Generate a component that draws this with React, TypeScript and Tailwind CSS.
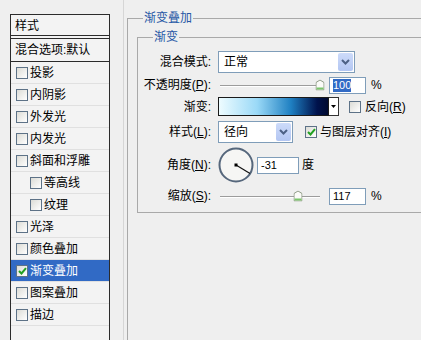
import React from "react";

const items = [
  { label: "投影" },
  { label: "内阴影" },
  { label: "外发光" },
  { label: "内发光" },
  { label: "斜面和浮雕" },
  { label: "等高线", sub: true },
  { label: "纹理", sub: true },
  { label: "光泽" },
  { label: "颜色叠加" },
  { label: "渐变叠加", checked: true, active: true },
  { label: "图案叠加" },
  { label: "描边" },
];

function CheckBox({ checked = false }: { checked?: boolean }) {
  return (
    <span className="flex h-[12px] w-[12px] shrink-0 items-center justify-center border border-[#5d7287] bg-gradient-to-br from-[#dcdcd6] to-white">
      {checked && (
        <svg width="9" height="8" viewBox="0 0 9 8">
          <path d="M1 4l2.5 2.5L8 1.2" stroke="#21a121" strokeWidth="2" fill="none" />
        </svg>
      )}
    </span>
  );
}

function Select({ value, width }: { value: string; width: string }) {
  return (
    <div className={`flex h-[22px] items-center border border-[#7f9db9] bg-white pl-[5px] pr-[1px] ${width}`}>
      <span className="flex-1">{value}</span>
      <span className="flex h-[18px] w-[15px] items-center justify-center rounded-[2px] bg-gradient-to-b from-[#cddbfa] to-[#b3c6f2]">
        <svg width="9" height="6" viewBox="0 0 9 6">
          <path d="M1 1l3.5 3.5L8 1" stroke="#4d6185" strokeWidth="2" fill="none" />
        </svg>
      </span>
    </div>
  );
}

function NumBox({ value, width, selected = false }: { value: string; width: string; selected?: boolean }) {
  return (
    <div className={`flex h-[17px] items-center border border-[#7f9db9] bg-white pl-[3px] text-[11px] ${width}`}>
      <span className={selected ? "bg-[#316ac5] leading-[13px] text-white" : "leading-[13px]"}>{value}</span>
    </div>
  );
}

function Slider({ value, max }: { value: number; max: number }) {
  const pos = (value / max) * 100;
  return (
    <div className="relative h-full w-[105px] shrink-0">
      <div className="absolute left-[2px] right-[3px] top-1/2 h-[2px] border-t border-[#9c9c9c] bg-white" />
      <svg
        className="absolute top-1/2 -translate-x-1/2 -translate-y-1/2"
        style={{ left: `calc(2px + ${pos}% * 0.95)` }}
        width="9"
        height="11"
        viewBox="0 0 9 11"
      >
        <path d="M0.5 3 L4.5 0.5 L8.5 3 V10.5 H0.5 Z" fill="#fbfbf8" stroke="#8e9a86" />
        <rect x="1" y="8" width="7" height="2" fill="#7bc56b" />
      </svg>
    </div>
  );
}

function Row({ label, h, mt, children }: { label: React.ReactNode; h: string; mt: string; children: React.ReactNode }) {
  return (
    <div className={`flex items-center ${h} ${mt}`}>
      <div className="w-[73px] shrink-0 text-right">{label}</div>
      <div className="ml-[7px] flex h-full items-center">{children}</div>
    </div>
  );
}

export default function App() {
  return (
    <div className="flex h-[340px] w-[421px] items-start overflow-hidden bg-[#efefef] font-['Liberation_Sans','Noto_Sans_CJK_SC',sans-serif] text-[12px] leading-[16px] text-black">
      {/* left list of styles */}
      <div className="ml-[10px] mt-[14px] h-[340px] w-[100px] shrink-0 border border-[#2b2b2b] bg-[#f3f3f3]">
        <div className="flex h-[21px] items-center border-b border-[#2b2b2b] pl-[4px] pt-[2px]">样式</div>
        <div className="mt-[2px] flex h-[24px] items-center border-y border-[#2b2b2b] pl-[4px]">混合选项:默认</div>
        {items.map((it) => (
          <div
            key={it.label}
            className={`flex h-[22px] items-center gap-[2px] border-b border-[#e0e0e0] ${it.sub ? "pl-[19px]" : "pl-[5px]"} ${
              it.active ? "bg-[#316ac5] text-white" : ""
            }`}
          >
            <CheckBox checked={it.checked} />
            <span>{it.label}</span>
          </div>
        ))}
      </div>

      <div className="h-[340px] w-[14px] shrink-0 border-r border-[#d6d6d6]" />

      {/* gradient overlay settings */}
      <fieldset className="ml-[3px] mt-[10px] h-[400px] w-[310px] shrink-0 border border-[#a9a9a9]">
        <legend className="ml-[15px] px-[1px] leading-[16px] text-[#2657a5]">渐变叠加</legend>
        <fieldset className="ml-[9px] mt-[3px] border border-[#a9a9a9] pb-[6px] pt-[6px]">
          <legend className="ml-[15px] px-[1px] leading-[16px] text-[#2657a5]">渐变</legend>

          <Row label="混合模式:" h="h-[22px]" mt="mt-0">
            <Select value="正常" width="w-[137px]" />
          </Row>

          <Row
            label={
              <>
                不透明度(<span className="underline">P</span>):
              </>
            }
            h="h-[22px]"
            mt="mt-[1px]"
          >
            <Slider value={100} max={100} />
            <div className="ml-[6px]">
              <NumBox value="100" width="w-[37px]" selected />
            </div>
            <span className="ml-[5px]">%</span>
          </Row>

          <Row label="渐变:" h="h-[19px]" mt="mt-[1px]">
            <div className="h-[19px] w-[111px] border border-[#1a1a1a] bg-[linear-gradient(to_right,#eefcff,#9ad9f7_35%,#1f80c2_66%,#00124c_90%,#000a30)]" />
            <div className="flex h-[19px] w-[10px] items-center justify-center border border-l-0 border-[#333] bg-white">
              <svg width="5" height="3" viewBox="0 0 5 3">
                <path d="M0 0h5L2.5 3z" fill="#000" />
              </svg>
            </div>
            <div className="ml-[10px] flex items-center gap-[4px]">
              <CheckBox />
              <span>
                反向(<span className="underline">R</span>)
              </span>
            </div>
          </Row>

          <Row
            label={
              <>
                样式(<span className="underline">L</span>):
              </>
            }
            h="h-[22px]"
            mt="mt-[5px]"
          >
            <Select value="径向" width="w-[75px]" />
            <div className="ml-[12px] flex items-center gap-[3px]">
              <CheckBox checked />
              <span>
                与图层对齐(<span className="underline">I</span>)
              </span>
            </div>
          </Row>

          <Row
            label={
              <>
                角度(<span className="underline">N</span>):
              </>
            }
            h="h-[36px]"
            mt="mt-[4px]"
          >
            <svg width="36" height="36" viewBox="0 0 36 36">
              <circle cx="18" cy="18" r="16.5" fill="#f6f6f4" stroke="#56677c" strokeWidth="2" />
              <line x1="18" y1="18" x2="32" y2="26.4" stroke="#111" strokeWidth="1.2" />
              <rect x="16.5" y="16.5" width="3" height="3" fill="#000" />
            </svg>
            <div className="ml-[3px]">
              <NumBox value="-31" width="w-[42px]" />
            </div>
            <span className="ml-[3px]">度</span>
          </Row>

          <Row
            label={
              <>
                缩放(<span className="underline">S</span>):
              </>
            }
            h="h-[20px]"
            mt="mt-[3px]"
          >
            <Slider value={117} max={150} />
            <div className="ml-[6px]">
              <NumBox value="117" width="w-[37px]" />
            </div>
            <span className="ml-[5px]">%</span>
          </Row>
        </fieldset>
      </fieldset>
    </div>
  );
}
